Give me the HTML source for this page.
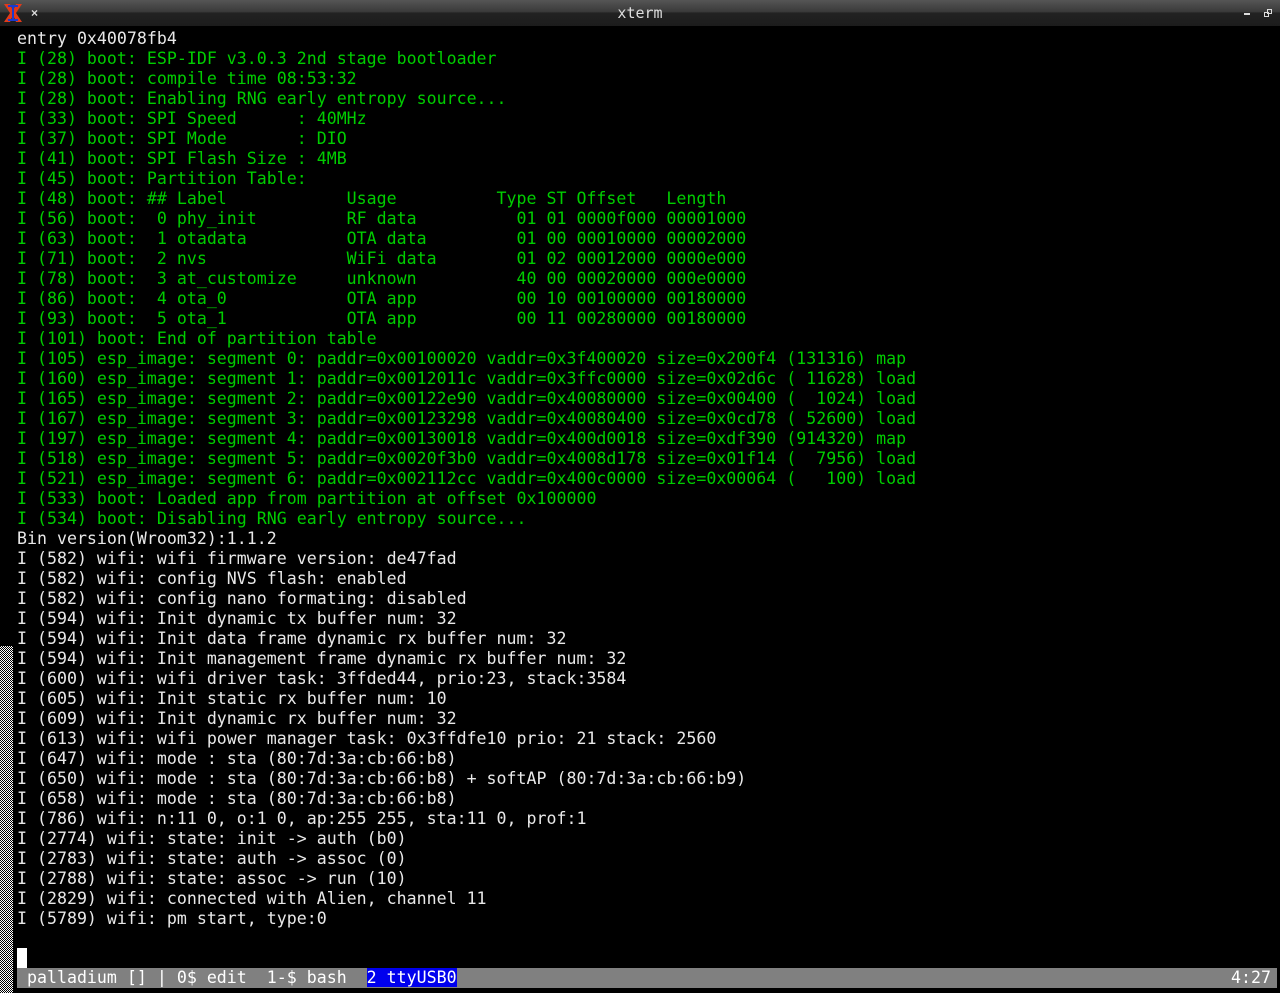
<!DOCTYPE html>
<html><head><style>
html,body{margin:0;padding:0;background:#000;width:1280px;height:993px;overflow:hidden}
#title{position:absolute;left:0;top:0;width:1280px;height:26px;background:linear-gradient(#555 0,#3a3a3a 45%,#222 50%,#1c1c1c 100%);}
#title .t{position:absolute;left:0;right:0;top:4px;text-align:center;color:#ddd;font:15px "DejaVu Sans Mono","Liberation Mono",monospace}
#scroll{position:absolute;left:0;top:646px;width:13px;height:347px;background:repeating-conic-gradient(#fff 0 25%,#000 0 50%) 0 0/2px 2px}
pre{margin:0;font:16.6px/20px "DejaVu Sans Mono","Liberation Mono",monospace;color:#e8e8e8;letter-spacing:0}
#main{position:absolute;left:17px;top:29px}
.g{color:#00cd00}
#status{position:absolute;left:17px;top:968px;width:1260px;height:20px;background:#808080}
#status pre{position:absolute;left:0;top:0;color:#fff}
#status pre.r{left:auto;right:6px}
.b{background:#0000ee}
#cur{position:absolute;left:17px;top:948px;width:10px;height:20px;background:#fff}
</style></head><body>
<div id="title">
<svg style="position:absolute;left:2px;top:2px" width="22" height="22" viewBox="0 0 22 22"><path d="M2 2h6l3 7 3-7h6l-6 9 6 9h-6l-3-7-3 7H2l6-9z" fill="#e03a1a"/><path d="M10 3h2v16h-2zM6 3h10v2H6zM6 17h10v2H6z" fill="#1a3ad0"/></svg>
<div style="position:absolute;left:31px;top:6px;color:#ddd;font:bold 12px sans-serif">×</div>
<div class="t">xterm</div>
<div style="position:absolute;left:1244px;top:13px;width:6px;height:2px;background:#ddd"></div>
<svg style="position:absolute;left:1264px;top:9px" width="8" height="8"><rect x="0.5" y="3.5" width="4" height="4" fill="none" stroke="#ddd"/><rect x="3.5" y="0.5" width="4" height="4" fill="none" stroke="#ddd"/></svg>
</div>
<div id="scroll"></div>
<pre id="main">entry 0x40078fb4
<span class="g">I (28) boot: ESP-IDF v3.0.3 2nd stage bootloader
I (28) boot: compile time 08:53:32
I (28) boot: Enabling RNG early entropy source...
I (33) boot: SPI Speed      : 40MHz
I (37) boot: SPI Mode       : DIO
I (41) boot: SPI Flash Size : 4MB
I (45) boot: Partition Table:
I (48) boot: ## Label            Usage          Type ST Offset   Length
I (56) boot:  0 phy_init         RF data          01 01 0000f000 00001000
I (63) boot:  1 otadata          OTA data         01 00 00010000 00002000
I (71) boot:  2 nvs              WiFi data        01 02 00012000 0000e000
I (78) boot:  3 at_customize     unknown          40 00 00020000 000e0000
I (86) boot:  4 ota_0            OTA app          00 10 00100000 00180000
I (93) boot:  5 ota_1            OTA app          00 11 00280000 00180000
I (101) boot: End of partition table
I (105) esp_image: segment 0: paddr=0x00100020 vaddr=0x3f400020 size=0x200f4 (131316) map
I (160) esp_image: segment 1: paddr=0x0012011c vaddr=0x3ffc0000 size=0x02d6c ( 11628) load
I (165) esp_image: segment 2: paddr=0x00122e90 vaddr=0x40080000 size=0x00400 (  1024) load
I (167) esp_image: segment 3: paddr=0x00123298 vaddr=0x40080400 size=0x0cd78 ( 52600) load
I (197) esp_image: segment 4: paddr=0x00130018 vaddr=0x400d0018 size=0xdf390 (914320) map
I (518) esp_image: segment 5: paddr=0x0020f3b0 vaddr=0x4008d178 size=0x01f14 (  7956) load
I (521) esp_image: segment 6: paddr=0x002112cc vaddr=0x400c0000 size=0x00064 (   100) load
I (533) boot: Loaded app from partition at offset 0x100000
I (534) boot: Disabling RNG early entropy source...</span>
Bin version(Wroom32):1.1.2
I (582) wifi: wifi firmware version: de47fad
I (582) wifi: config NVS flash: enabled
I (582) wifi: config nano formating: disabled
I (594) wifi: Init dynamic tx buffer num: 32
I (594) wifi: Init data frame dynamic rx buffer num: 32
I (594) wifi: Init management frame dynamic rx buffer num: 32
I (600) wifi: wifi driver task: 3ffded44, prio:23, stack:3584
I (605) wifi: Init static rx buffer num: 10
I (609) wifi: Init dynamic rx buffer num: 32
I (613) wifi: wifi power manager task: 0x3ffdfe10 prio: 21 stack: 2560
I (647) wifi: mode : sta (80:7d:3a:cb:66:b8)
I (650) wifi: mode : sta (80:7d:3a:cb:66:b8) + softAP (80:7d:3a:cb:66:b9)
I (658) wifi: mode : sta (80:7d:3a:cb:66:b8)
I (786) wifi: n:11 0, o:1 0, ap:255 255, sta:11 0, prof:1
I (2774) wifi: state: init -&gt; auth (b0)
I (2783) wifi: state: auth -&gt; assoc (0)
I (2788) wifi: state: assoc -&gt; run (10)
I (2829) wifi: connected with Alien, channel 11
I (5789) wifi: pm start, type:0</pre>
<div id="cur"></div>
<div id="status"><pre> palladium [] | 0$ edit  1-$ bash  <span class="b">2 ttyUSB0</span></pre><pre class="r">4:27</pre></div>
</body></html>
